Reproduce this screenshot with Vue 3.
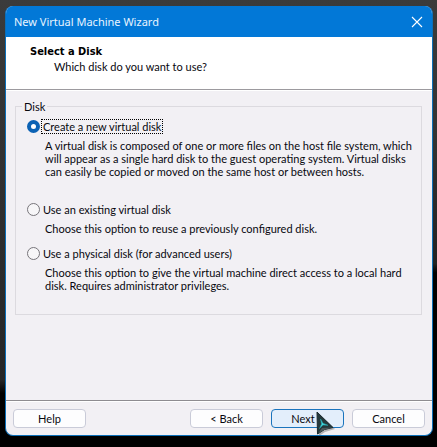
<script setup>
import { ref } from 'vue'

const selected = ref('new')
const options = [
  {
    id: 'new',
    label: 'Create a new virtual disk',
    lines: [
      'A virtual disk is composed of one or more files on the host file system, which',
      'will appear as a single hard disk to the guest operating system. Virtual disks',
      'can easily be copied or moved on the same host or between hosts.',
    ],
  },
  {
    id: 'existing',
    label: 'Use an existing virtual disk',
    lines: ['Choose this option to reuse a previously configured disk.'],
  },
  {
    id: 'physical',
    label: 'Use a physical disk (for advanced users)',
    lines: [
      'Choose this option to give the virtual machine direct access to a local hard',
      'disk. Requires administrator privileges.',
    ],
  },
]
</script>

<template>
  <div class="desktop">
    <main class="window">
      <header class="titlebar">
        <span class="title">New Virtual Machine Wizard</span>
        <button class="close" type="button" aria-label="Close">
          <svg viewBox="0 0 12 12" width="12" height="12">
            <path d="M1 1 11 11M11 1 1 11" fill="none" stroke="#fff" stroke-width="1.1" />
          </svg>
        </button>
      </header>

      <section class="heading">
        <h1>Select a Disk</h1>
        <p>Which disk do you want to use?</p>
      </section>

      <form class="content" @submit.prevent>
        <fieldset>
          <legend>Disk</legend>
          <div v-for="o in options" :key="o.id" class="option" :class="'option-' + o.id">
            <label class="choice">
              <input v-model="selected" type="radio" name="disk" :value="o.id" />
              <span :class="{ focused: selected === o.id }">{{ o.label }}</span>
            </label>
            <p class="description">
              <template v-for="(line, i) in o.lines" :key="i"><br v-if="i" />{{ line }}</template>
            </p>
          </div>
        </fieldset>
      </form>

      <footer class="actions">
        <button type="button" class="btn help">Help</button>
        <button type="button" class="btn">&lt; Back</button>
        <button type="button" class="btn primary">
          <span class="next-label">Next &gt;</span>
          <svg class="cursor" viewBox="0 0 22 28" width="22" height="28" aria-hidden="true">
            <path d="M3 1 20 17 10 20 4 24Z" fill="#000" opacity=".25" />
            <path d="M2 0 18 15.500 9.500 17.500 2.500 22Z" fill="#24383c" stroke="#1b2a2e" stroke-width="1" />
            <path d="M3 21.500 7 16 17.500 15.500 9.500 17.800Z" fill="#4d585b" />
            <path d="M5.500 7 8 11.300 13 13.300 8 13 4.500 16.500 6.500 12Z" fill="#3fdbe0" stroke="#2a9aa2" stroke-width=".6" />
          </svg>
        </button>
        <button type="button" class="btn">Cancel</button>
      </footer>
    </main>
  </div>
</template>

<style>
body {
  margin: 0;
  background: #000;
}
</style>

<style scoped>
.desktop {
  box-sizing: border-box;
  min-height: 100vh;
  padding: 6px 4px 11px 5px;
  display: flex;
  background:
    linear-gradient(#3b3b3b, #333 30%, #262626 85%, #000 88%) left / 50% 100% no-repeat,
    linear-gradient(#3b3b3b, #333 30%, #222 59%, #000 61%);
  font: 11px/13px Lato, "Liberation Sans", sans-serif;
  color: #08080f;
}
.window {
  flex: 1;
  display: flex;
  flex-direction: column;
  overflow: hidden;
  border: 1px solid #0b6fb8;
  border-top: 0;
  border-radius: 8px;
  background: #f2f0f4;
}
.titlebar {
  display: flex;
  align-items: center;
  justify-content: space-between;
  height: 31px;
  padding: 0 9px 0 8px;
  background: #0278d7;
}
.title {
  font: 11px/16px "Noto Sans", "Open Sans", sans-serif;
  color: #e8f4ff;
}
.close {
  display: flex;
  padding: 0;
  border: 0;
  background: none;
}
.heading {
  padding: 7px 24px 16px;
  background: #fff;
  border-bottom: 1px solid #9c9a9e;
}
h1 {
  margin: 0;
  font: bold 11px/16px "DejaVu Sans Condensed", "DejaVu Sans", sans-serif;
  color: #000;
}
p {
  margin: 0;
}
.heading p {
  padding: 0 24px;
}
.content {
  flex: 1;
  padding: 9px 10px 0 9px;
  border-top: 1px solid #fff;
}
fieldset {
  margin: 0;
  padding: 7px 10px 22px 11px;
  border: 1px solid #dcdadf;
  min-width: 0;
}
legend {
  margin-left: -5px;
  padding: 0 2px;
}
.option-new {
  margin-bottom: 25px;
}
.option-existing {
  margin-bottom: 12px;
}
.choice {
  display: flex;
  align-items: center;
  gap: 2px;
}
.choice span {
  padding: 0 1px;
  white-space: nowrap;
}
.choice .focused {
  outline: 1px dotted #000;
}
input {
  appearance: none;
  flex: none;
  box-sizing: border-box;
  width: 13px;
  height: 13px;
  margin: 0;
  border: 1px solid #77757a;
  border-radius: 50%;
  background: #f7f6f8;
}
input:checked {
  border: 4px solid #0c62b4;
  background: #fff;
}
.description {
  padding: 6px 0 0 18px;
  white-space: nowrap;
}
.actions {
  display: flex;
  gap: 8px;
  padding: 8px 7px 7px;
  border-top: 1px solid #8e8c90;
  box-shadow: inset 0 1px #fff;
}
.btn {
  position: relative;
  box-sizing: border-box;
  width: 73px;
  height: 19px;
  padding: 0;
  border: 1px solid #c9cbd8;
  border-radius: 4px;
  background: #fdfdfe;
  font: inherit;
  color: inherit;
}
.help {
  margin-right: auto;
}
.primary {
  border-color: #1b74bd;
  background: #e3eefb;
}
.cursor {
  position: absolute;
  top: 2px;
  left: 43px;
}
</style>
